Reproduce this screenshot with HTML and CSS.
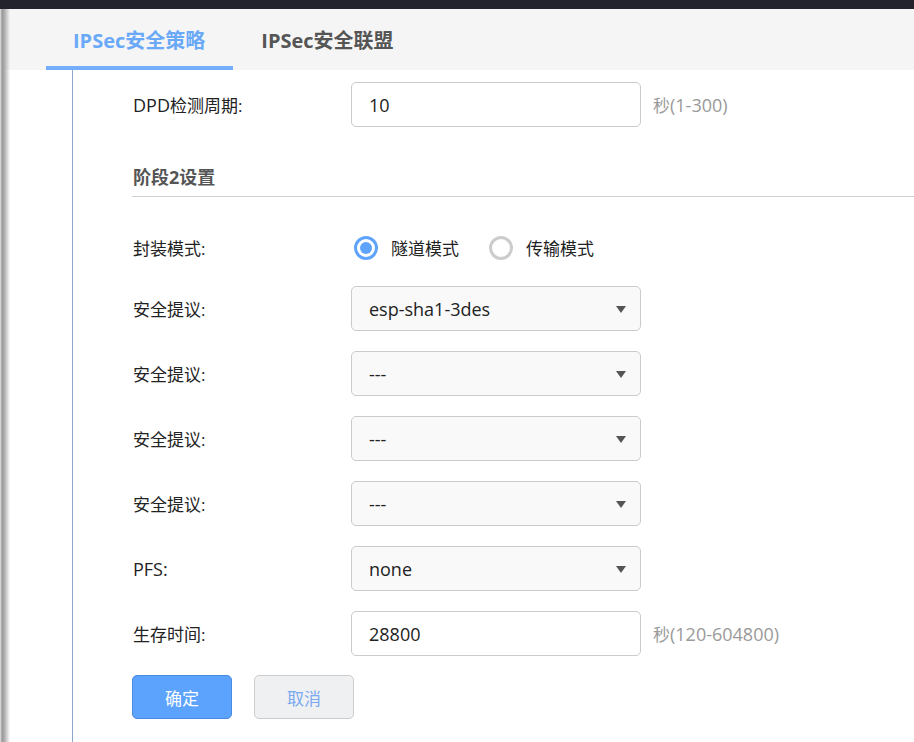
FILE: index.html
```html
<!DOCTYPE html>
<html lang="zh-CN">
<head>
<meta charset="utf-8">
<title>IPSec</title>
<link rel="stylesheet" href="styles.css">
</head>
<body>
<div class="topbar"></div>
<div class="page">
  <div class="tabs">
    <div class="tab active">IPSec安全策略</div>
    <div class="tab">IPSec安全联盟</div>
  </div>
  <div class="content">
    <div class="form">
      <div class="row first">
        <div class="label"><span class="en">DPD</span>检测周期:</div>
        <div class="field input">10</div>
        <div class="hint">秒<span class="en">(1-300)</span></div>
      </div>
      <div class="section">阶段2设置</div>
      <div class="row radio-row">
        <div class="label">封装模式:</div>
        <div class="radios">
          <span class="radio checked"></span><span class="radio-text">隧道模式</span>
          <span class="radio"></span><span class="radio-text">传输模式</span>
        </div>
      </div>
      <div class="row">
        <div class="label">安全提议:</div>
        <div class="field select">esp-sha1-3des<span class="arrow"></span></div>
      </div>
      <div class="row">
        <div class="label">安全提议:</div>
        <div class="field select">---<span class="arrow"></span></div>
      </div>
      <div class="row">
        <div class="label">安全提议:</div>
        <div class="field select">---<span class="arrow"></span></div>
      </div>
      <div class="row">
        <div class="label">安全提议:</div>
        <div class="field select">---<span class="arrow"></span></div>
      </div>
      <div class="row">
        <div class="label"><span class="en">PFS:</span></div>
        <div class="field select">none<span class="arrow"></span></div>
      </div>
      <div class="row">
        <div class="label">生存时间:</div>
        <div class="field input">28800</div>
        <div class="hint">秒<span class="en">(120-604800)</span></div>
      </div>
      <div class="buttons">
        <div class="btn primary">确定</div>
        <div class="btn cancel">取消</div>
      </div>
    </div>
  </div>
</div>
</body>
</html>
```
FILE: styles.css
```css
html, body {
  margin: 0;
  padding: 0;
  background: #fff;
  height: 100%;
  overflow: hidden;
}
body {
  font-family: "Open Sans", "Noto Sans CJK SC", sans-serif;
  font-size: 17px;
  color: #222;
}
.en {
  font-size: 18px;
}
.topbar {
  height: 9px;
  background: #23232d;
}
.page {
  position: relative;
  height: 733px;
}
.page::before {
  content: "";
  position: absolute;
  left: 0;
  top: 0;
  bottom: 0;
  width: 10px;
  background: linear-gradient(to right, #e6e6e6 0, #9a9a9a 2px, #a8a8a8 4px, rgba(255,255,255,0) 10px);
  z-index: 2;
}
.tabs {
  height: 61px;
  background: #f5f5f5;
  display: flex;
  padding-left: 46px;
  box-sizing: border-box;
}
.tab {
  padding: 6px 28px 0 27px;
  line-height: 51px;
  height: 61px;
  box-sizing: border-box;
  font-size: 20px;
  font-weight: bold;
  color: #555;
  border-bottom: 4px solid transparent;
}
.tab.active {
  color: #6aa9f8;
  border-bottom-color: #74aefa;
}
.tab + .tab {
  padding-left: 28px;
}
.content {
  margin-left: 72px;
  border-left: 1.5px solid #8ea4cc;
  padding-left: 59px;
  height: 672px;
  box-sizing: border-box;
  padding-top: 12px;
}
.row {
  display: flex;
  align-items: center;
  height: 45px;
  margin-bottom: 20px;
}
.row.first {
  margin-bottom: 0;
}
.label {
  width: 218px;
  padding-left: 1px;
  flex: none;
}
.field {
  width: 290px;
  height: 45px;
  box-sizing: border-box;
  border: 1px solid #cbcbcb;
  border-radius: 5px;
  padding-left: 17px;
  display: flex;
  align-items: center;
  position: relative;
  font-size: 18px;
}
.input {
  background: #fff;
}
.select {
  background: #f9f9f9;
}
.arrow {
  position: absolute;
  right: 14px;
  top: 19px;
  width: 0;
  height: 0;
  border-left: 5.5px solid transparent;
  border-right: 5.5px solid transparent;
  border-top: 7px solid #555;
}
.hint {
  margin-left: 12px;
  color: #9a9a9a;
}
.section {
  margin-top: 38px;
  padding-left: 1px;
  line-height: 24px;
  font-size: 18px;
  font-weight: bold;
  color: #555;
  padding-bottom: 7px;
  border-bottom: 1px solid #cfcfcf;
  margin-bottom: 30px;
}
.radio-row {
  margin-top: -2px;
  margin-bottom: 16px;
}
.radios {
  display: flex;
  align-items: center;
  padding-left: 3px;
}
.radio {
  width: 24px;
  height: 24px;
  box-sizing: border-box;
  border: 3px solid #cccccc;
  border-radius: 50%;
  position: relative;
  flex: none;
}
.radio.checked {
  border-color: #5ea4fd;
}
.radio.checked::after {
  content: "";
  position: absolute;
  left: 3px;
  top: 3px;
  width: 12px;
  height: 12px;
  border-radius: 50%;
  background: #5ea4fd;
}
.radio-text {
  margin-left: 13px;
  margin-right: 30px;
}
.buttons {
  display: flex;
  gap: 22px;
  margin-top: -1px;
}
.btn {
  width: 100px;
  height: 44px;
  box-sizing: border-box;
  border-radius: 5px;
  display: flex;
  align-items: center;
  justify-content: center;
}
.btn.primary {
  background: #5ca3fe;
  border: 1px solid #4a8be2;
  color: #fff;
}
.btn.cancel {
  background: #eff0f2;
  border: 1px solid #cccccc;
  color: #7aa9f0;
}
```
